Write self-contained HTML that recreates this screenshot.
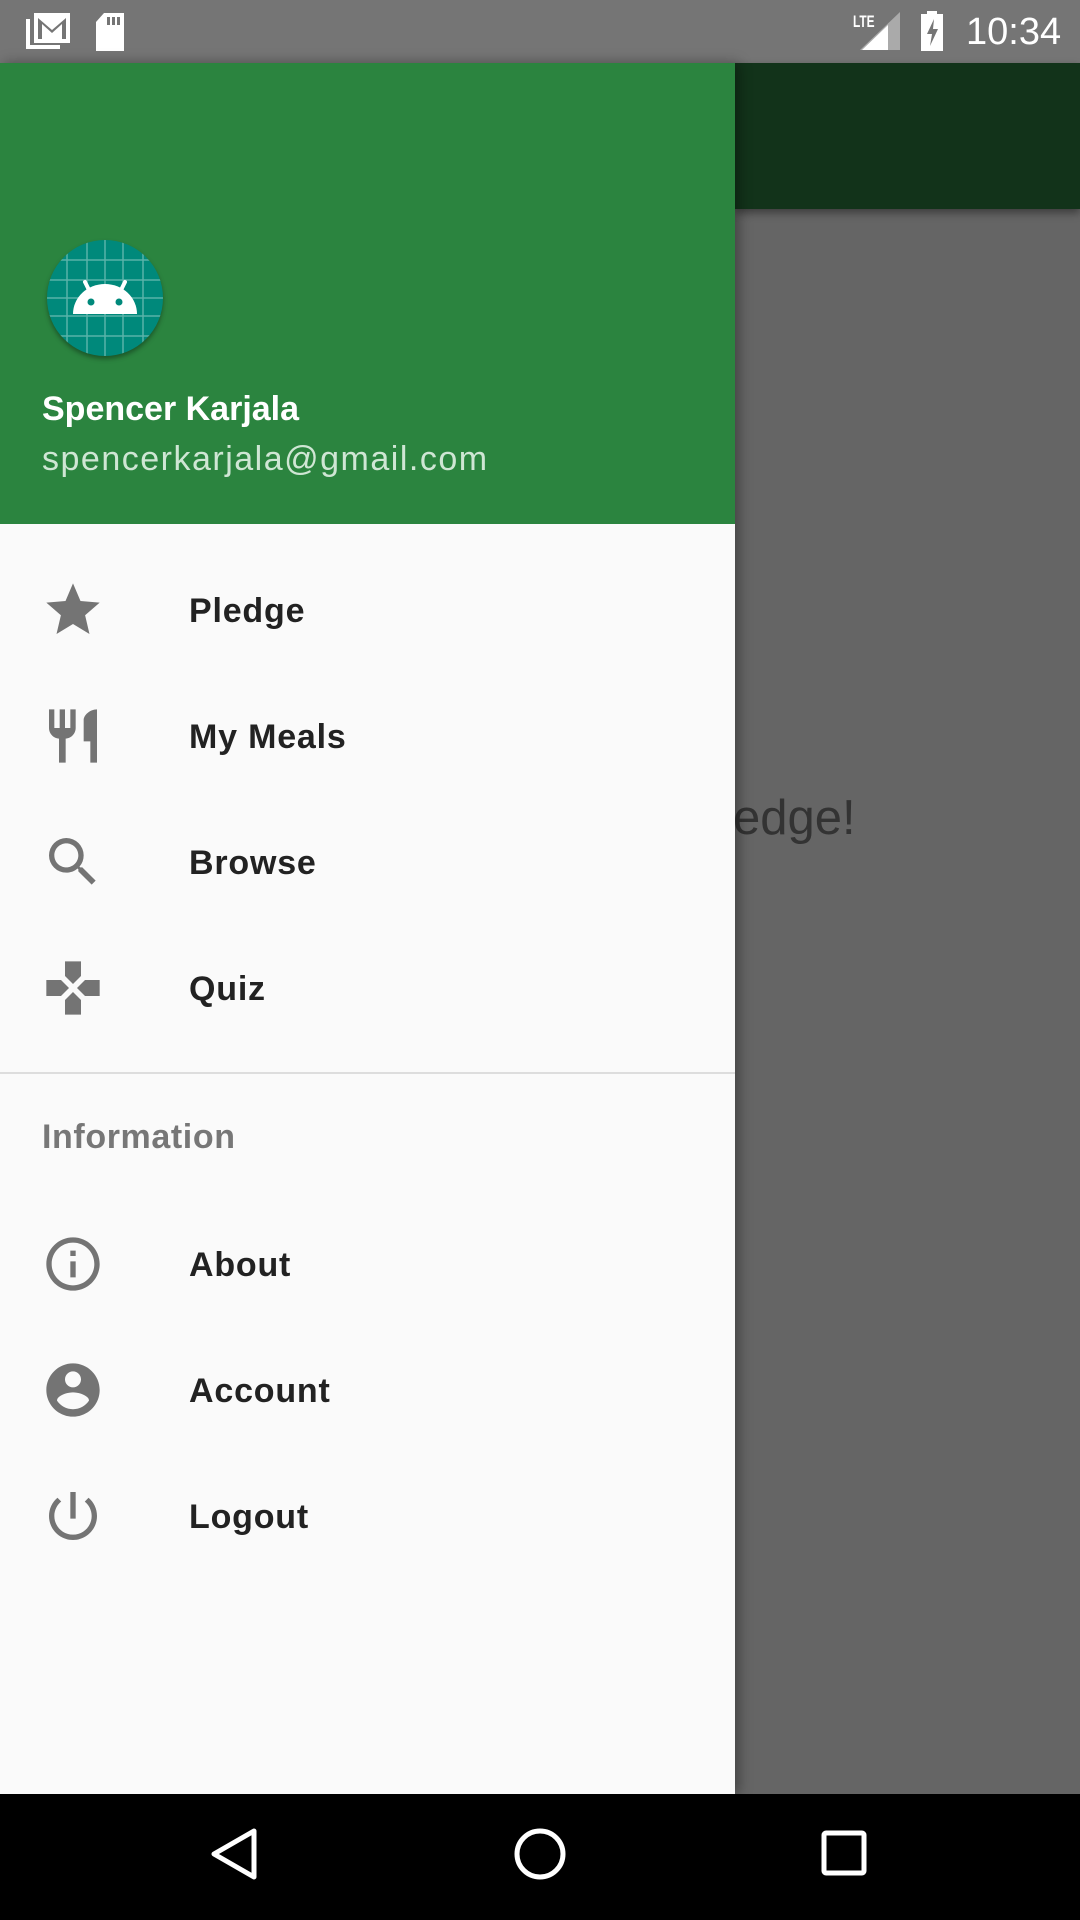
<!DOCTYPE html>
<html><head><meta charset="utf-8"><style>
*{margin:0;padding:0;box-sizing:border-box}
body{width:1080px;height:1920px;position:relative;overflow:hidden;background:#656565;font-family:"Liberation Sans",sans-serif}
.sb{position:absolute;left:0;top:0;width:1080px;height:63px;background:#757575}
.tb{position:absolute;left:735px;top:63px;width:345px;height:146px;background:#12331a;box-shadow:0 4px 8px rgba(0,0,0,.4)}
.bg{position:absolute;left:496px;top:790px;font-size:49px;color:#333}
.dr{position:absolute;left:0;top:63px;width:735px;height:1731px;background:#fafafa;box-shadow:4px 0 12px rgba(0,0,0,.35)}
.hd{position:absolute;left:0;top:0;width:735px;height:461px;background:#2b843f}
.av{position:absolute;left:47px;top:177px;width:116px;height:116px;border-radius:50%;background:#00897b;overflow:hidden;box-shadow:0 3px 5px rgba(0,0,0,.35)}
.name{position:absolute;left:42px;top:327px;font-size:34px;font-weight:bold;color:#fff}
.mail{position:absolute;left:42px;top:377px;font-size:34px;color:#cfe6d4;letter-spacing:1.5px}
.it{position:absolute;left:0;width:735px;height:100px}
.it svg{position:absolute;left:41px;top:18px;width:64px;height:64px;fill:#747474}
.it span{position:absolute;left:189px;top:32px;font-size:34px;font-weight:bold;color:#222;letter-spacing:.8px}
.div{position:absolute;left:0;top:1009px;width:735px;height:2px;background:#ddd}
.sec{position:absolute;left:42px;top:1055px;font-size:34px;font-weight:bold;color:#777;letter-spacing:.6px}
.nb{position:absolute;left:0;top:1794px;width:1080px;height:126px;background:#000}
</style></head><body>
<div class="sb">
<svg style="position:absolute;left:24px;top:13px" width="48" height="38" viewBox="0 0 48 38"><path d="M2 6v30h34v-4H6V6z" fill="#fff"/><rect x="10" y="0" width="36" height="30" fill="#fff"/><path d="M14 26V5l14 12 14-12v21h-4V11L28 20 18 11v15z" fill="#757575"/></svg>
<svg style="position:absolute;left:94px;top:13px" width="32" height="38" viewBox="0 0 32 38"><path d="M10 0h20v38H2V9z" fill="#fff"/><rect x="13" y="4" width="3" height="8" fill="#757575"/><rect x="18" y="4" width="3" height="8" fill="#757575"/><rect x="23" y="4" width="3" height="8" fill="#757575"/></svg>
<div style="position:absolute;left:853px;top:12px;font-size:17px;font-weight:bold;color:#fff;transform:scaleX(.7);transform-origin:left">LTE</div>
<svg style="position:absolute;left:860px;top:12px" width="42" height="38" viewBox="0 0 42 38"><path d="M40 0V38H0z" fill="#aaa"/><path d="M28 13V38H2z" fill="#fff"/></svg>
<svg style="position:absolute;left:921px;top:11px" width="22" height="40" viewBox="0 0 22 40"><rect x="6" y="0" width="10" height="4" fill="#fff"/><rect x="0" y="3" width="22" height="37" fill="#fff"/><path d="M13 8 6 23h5l-2 12 8-17h-5z" fill="#757575"/></svg>
<div style="position:absolute;left:966px;top:11px;font-size:38px;color:#fff">10:34</div>
</div>
<div class="tb"></div>
<div class="bg">Take the pledge!</div>
<div class="dr">
<div class="hd">
<div class="av"><svg width="116" height="116" viewBox="0 0 116 116"><g stroke="rgba(255,255,255,.35)" stroke-width="1.5"><path d="M0 20H116M0 40H116M0 58H116M0 76H116M0 96H116M20 0V116M40 0V116M58 0V116M76 0V116M96 0V116"/></g><path d="M26 74a32 30 0 0 1 64 0z" fill="#fff"/><path d="M38 42l6 12M78 42l-6 12" stroke="#fff" stroke-width="4" stroke-linecap="round"/><circle cx="44" cy="62" r="3.5" fill="#00897b"/><circle cx="72" cy="62" r="3.5" fill="#00897b"/></svg></div>
<div class="name">Spencer Karjala</div>
<div class="mail">spencerkarjala@gmail.com</div>
</div>
<div class="it" style="top:497px"><svg viewBox="0 0 24 24"><path d="M12 17.27L18.18 21l-1.64-7.03L22 9.24l-7.19-.61L12 2 9.19 8.63 2 9.24l5.46 4.73L5.82 21z"/></svg><span>Pledge</span></div>
<div class="it" style="top:623px"><svg viewBox="0 0 24 24"><path d="M11 9H9V2H7v7H5V2H3v7c0 2.12 1.66 3.84 3.75 3.97V22h2.5v-9.03C11.34 12.84 13 11.12 13 9V2h-2v7zm5-3v8h2.5v8H21V2c-2.760 0-5 2.24-5 4z"/></svg><span>My Meals</span></div>
<div class="it" style="top:749px"><svg viewBox="0 0 24 24"><path d="M15.5 14h-.79l-.28-.27A6.47 6.47 0 0 0 16 9.5 6.5 6.5 0 1 0 9.5 16c1.61 0 3.09-.59 4.230-1.57l.27.28v.79l5 4.99L20.49 19l-4.99-5zm-6 0C7.01 14 5 11.99 5 9.5S7.01 5 9.5 5 14 7.01 14 9.5 11.99 14 9.5 14z"/></svg><span>Browse</span></div>
<div class="it" style="top:875px"><svg viewBox="0 0 24 24"><path d="M15 7.5V2H9v5.5l3 3 3-3zM7.5 9H2v6h5.5l3-3-3-3zM9 16.5V22h6v-5.5l-3-3-3 3zM16.5 9l-3 3 3 3H22V9h-5.5z"/></svg><span>Quiz</span></div>
<div class="div"></div>
<div class="sec">Information</div>
<div class="it" style="top:1151px"><svg viewBox="0 0 24 24"><path d="M11 7h2v2h-2zm0 4h2v6h-2zm1-9C6.48 2 2 6.48 2 12s4.48 10 10 10 10-4.48 10-10S17.52 2 12 2zm0 18c-4.41 0-8-3.59-8-8s3.59-8 8-8 8 3.59 8 8-3.59 8-8 8z"/></svg><span>About</span></div>
<div class="it" style="top:1277px"><svg viewBox="0 0 24 24"><path d="M12 2C6.48 2 2 6.48 2 12s4.48 10 10 10 10-4.48 10-10S17.52 2 12 2zm0 3c1.66 0 3 1.34 3 3s-1.34 3-3 3-3-1.34-3-3 1.34-3 3-3zm0 14.2c-2.5 0-4.710-1.28-6-3.22.03-1.99 4-3.08 6-3.08 1.99 0 5.97 1.09 6 3.08-1.29 1.94-3.5 3.22-6 3.22z"/></svg><span>Account</span></div>
<div class="it" style="top:1403px"><svg viewBox="0 0 24 24"><path d="M13 3h-2v10h2V3zm4.83 2.17l-1.42 1.42C17.99 7.86 19 9.81 19 12c0 3.87-3.13 7-7 7s-7-3.13-7-7c0-2.19 1.01-4.14 2.58-5.42L6.17 5.17C4.23 6.82 3 9.26 3 12c0 4.97 4.03 9 9 9s9-4.03 9-9c0-2.74-1.23-5.18-3.17-6.83z"/></svg><span>Logout</span></div>
</div>
<div class="nb">
<svg style="position:absolute;left:210px;top:33px" width="50" height="54" viewBox="0 0 50 54"><path d="M44 4V50L4 27z" fill="none" stroke="#fff" stroke-width="5" stroke-linejoin="round"/></svg>
<svg style="position:absolute;left:513px;top:33px" width="54" height="54" viewBox="0 0 54 54"><circle cx="27" cy="27" r="23" fill="none" stroke="#fff" stroke-width="5"/></svg>
<svg style="position:absolute;left:821px;top:36px" width="46" height="46" viewBox="0 0 46 46"><rect x="3" y="3" width="40" height="40" rx="2" fill="none" stroke="#fff" stroke-width="5"/></svg>
</div>
</body></html>
